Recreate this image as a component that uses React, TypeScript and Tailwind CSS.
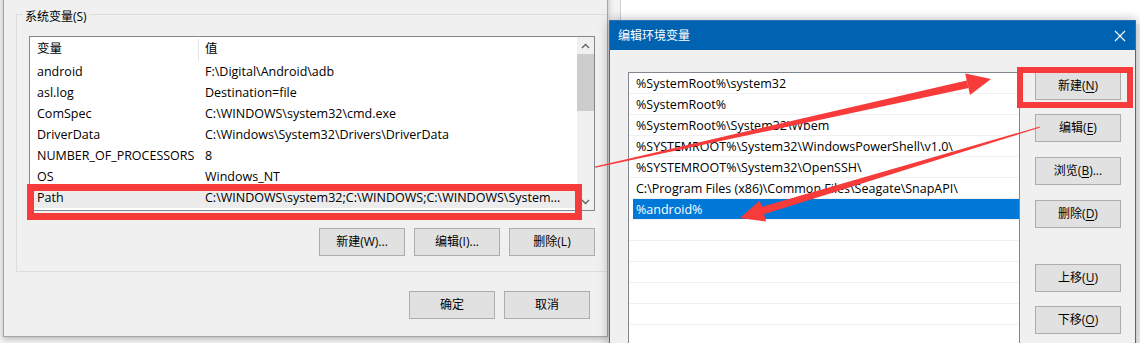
import type { ReactNode } from "react";

const ui = "font-['Open_Sans','Noto_Sans_CJK_SC',sans-serif]";

function Btn({ children, className = "" }: { children: ReactNode; className?: string }) {
  return (
    <div
      className={`flex h-[28px] w-[86px] shrink-0 items-center justify-center border border-[#adadad] bg-[#e1e1e1] text-[12px] text-black ${className}`}
    >
      {children}
    </div>
  );
}

const sysVars = [
  ["android", "F:\\Digital\\Android\\adb"],
  ["asl.log", "Destination=file"],
  ["ComSpec", "C:\\WINDOWS\\system32\\cmd.exe"],
  ["DriverData", "C:\\Windows\\System32\\Drivers\\DriverData"],
  ["NUMBER_OF_PROCESSORS", "8"],
  ["OS", "Windows_NT"],
  ["Path", "C:\\WINDOWS\\system32;C:\\WINDOWS;C:\\WINDOWS\\System..."],
];

const paths = [
  "%SystemRoot%\\system32",
  "%SystemRoot%",
  "%SystemRoot%\\System32\\Wbem",
  "%SYSTEMROOT%\\System32\\WindowsPowerShell\\v1.0\\",
  "%SYSTEMROOT%\\System32\\OpenSSH\\",
  "C:\\Program Files (x86)\\Common Files\\Seagate\\SnapAPI\\",
  "%android%",
  "",
  "",
  "",
  "",
  "",
  "",
];

function Mn({ k }: { k: string }) {
  return <span className="underline underline-offset-[2px]">{k}</span>;
}

export default function App() {
  return (
    <div className={`relative h-[343px] w-[1140px] overflow-hidden bg-[#f3f3f3] text-black ${ui}`}>
      {/* window behind, top right */}
      <div className="absolute left-[620px] right-0 top-0 h-[24px] border-l border-[#d0d0d0] bg-white" />

      {/* 环境变量 window */}
      <div className="absolute left-[3px] top-[-10px] flex h-[347px] w-[605px] flex-col overflow-hidden border border-[#a6a6a6] bg-[#f0f0f0] shadow-[0_2px_6px_rgba(0,0,0,0.25)]">
        <fieldset className="ml-[12px] mt-[14px] w-[592px] shrink-0 border border-[#dcdcdc] px-[12px] pb-[15px]">
          <legend className="ml-[-6px] px-[2px] pt-[5px] text-[12px] leading-[14px]">系统变量(S)</legend>
          <div className="mt-[12px] flex h-[175px] w-[566px] border border-[#828790] bg-white">
            <div className="flex flex-1 flex-col text-[12.5px]">
              <div className="flex h-[24px] items-center pt-[1px]">
                <div className="w-[168px] pl-[7px]">变量</div>
                <div className="h-[22px] w-px bg-[#e5e5e5]" />
                <div className="pl-[6px]">值</div>
              </div>
              {sysVars.map(([k, v]) => (
                <div key={k} className={`flex h-[21px] items-center pt-[2px] ${k === "Path" ? "bg-[#ececec]" : ""}`}>
                  <div className="w-[169px] pl-[7px] whitespace-nowrap">{k}</div>
                  <div className="pl-[6px] whitespace-nowrap">{v}</div>
                </div>
              ))}
            </div>
            <div className="flex w-[17px] flex-col bg-[#f0f0f0]">
              <div className="flex h-[17px] items-center justify-center">
                <svg width="9" height="6" viewBox="0 0 9 6">
                  <path d="M1 5 L4.5 1.5 L8 5" fill="none" stroke="#606060" strokeWidth="1.3" />
                </svg>
              </div>
              <div className="h-[57px] bg-[#cdcdcd]" />
              <div className="flex-1" />
              <div className="flex h-[17px] items-center justify-center">
                <svg width="9" height="6" viewBox="0 0 9 6">
                  <path d="M1 1 L4.5 4.5 L8 1" fill="none" stroke="#606060" strokeWidth="1.3" />
                </svg>
              </div>
            </div>
          </div>
          <div className="mt-[17px] flex w-[566px] justify-end gap-[9px]">
            <Btn>新建(W)...</Btn>
            <Btn>编辑(I)...</Btn>
            <Btn>删除(L)</Btn>
          </div>
        </fieldset>
        <div className="mt-[19px] flex justify-end gap-[9px] pr-[17px]">
          <Btn>确定</Btn>
          <Btn>取消</Btn>
        </div>
      </div>

      {/* 编辑环境变量 dialog */}
      <div className="absolute left-[609px] top-[20px] flex h-[340px] w-[527px] flex-col border border-[#2a72b8] bg-[#f0f0f0] shadow-[0_0_10px_rgba(0,0,0,0.3)]">
        <div className="flex h-[29px] shrink-0 items-center justify-between bg-[#0063b1] pl-[8px] pr-[9px] text-[12px] text-white">
          <span>编辑环境变量</span>
          <svg width="12" height="12" viewBox="0 0 12 12">
            <path d="M1 1 L11 11 M11 1 L1 11" stroke="white" strokeWidth="1.1" />
          </svg>
        </div>
        <div className="flex pl-[18px] pt-[22px]">
          <div className="flex h-[300px] w-[392px] flex-col border border-[#828790] bg-white text-[12.5px]">
            {paths.map((p, i) =>
              p === "%android%" ? (
                <div key={i} className="flex h-[21px] shrink-0 items-center border-b border-[#f0f0f0]">
                  <div className="ml-[4px] flex h-full flex-1 items-center bg-[#0078d7] pl-[3px] pt-[2px] text-white">{p}</div>
                </div>
              ) : (
                <div key={i} className="flex h-[21px] shrink-0 items-center border-b border-[#f0f0f0] pl-[7px] pt-[2px] whitespace-nowrap">
                  {p}
                </div>
              )
            )}
          </div>
          <div className="ml-[15px] flex flex-col">
            <Btn>
              新建(<Mn k="N" />)
            </Btn>
            <Btn className="mt-[14px]">
              编辑(<Mn k="E" />)
            </Btn>
            <Btn className="mt-[15px]">
              浏览(<Mn k="B" />)...
            </Btn>
            <Btn className="mt-[15px]">
              删除(<Mn k="D" />)
            </Btn>
            <Btn className="mt-[36px]">
              上移(<Mn k="U" />)
            </Btn>
            <Btn className="mt-[14px]">
              下移(<Mn k="O" />)
            </Btn>
          </div>
        </div>
      </div>

      {/* red annotations */}
      <svg className="pointer-events-none absolute inset-0" width="1140" height="343" viewBox="0 0 1140 343">
        <rect x="30.5" y="187.5" width="548" height="29" fill="none" stroke="#f73a3a" strokeWidth="7" />
        <rect x="1020" y="70" width="110" height="35" fill="none" stroke="#f73a3a" strokeWidth="6" />
        {/* arrow 1: Path -> 新建 */}
        <polygon points="595,166.4 595.3,167.8 968.6,88 966.7,80.4" fill="#f73a3a" />
        <polygon points="991,79 970,94.9 965.2,73.5" fill="#f73a3a" />
        {/* arrow 2: 编辑 -> %android% */}
        <polygon points="1040,126.5 1039.6,127.7 762.3,214.8 759.7,207.3" fill="#f73a3a" />
        <polygon points="740,218 759.8,200.5 766.2,221.5" fill="#f73a3a" />
      </svg>
    </div>
  );
}
